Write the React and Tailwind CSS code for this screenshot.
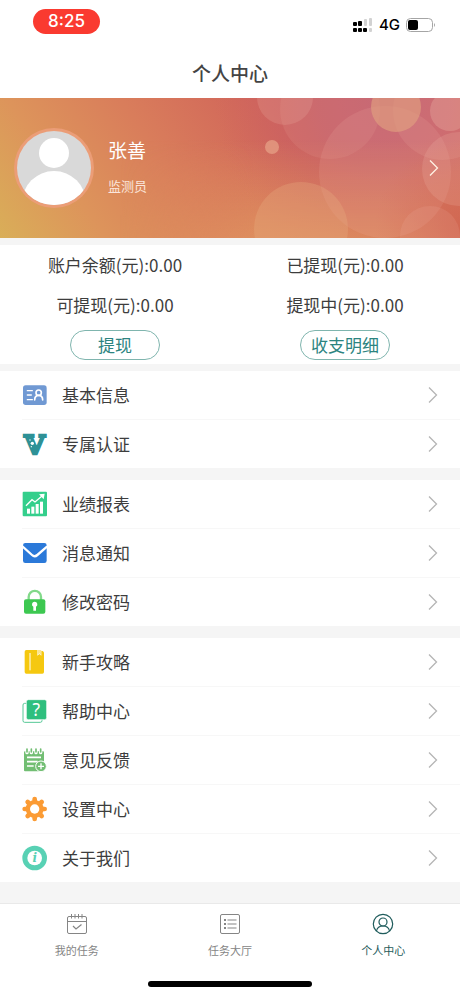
import React from 'react';

const IdCardIcon = () => (
    <svg viewBox="0 0 78 78" className="h-[26px] w-[26px]" fill="none" stroke="#fff" strokeWidth="5" strokeLinecap="round">
        <rect x="3" y="10" width="71" height="59" rx="8" fill="#7099d3" stroke="none" />
        <path d="M16 26h15M16 39h12M16 53h15" strokeWidth="4" />
        <circle cx="50" cy="32" r="8" />
        <path d="M38 54c0-9 4-14 12-14s12 5 12 14" />
    </svg>
);

const BadgeIcon = () => (
    <svg viewBox="0 0 78 78" className="h-[26px] w-[26px] overflow-visible">
        <text x="38" y="68" textAnchor="middle" fontFamily="DejaVu Serif, serif" fontWeight="700" fontSize="80" fill="#2e9196" stroke="#2e9196" strokeWidth="8">V</text>
        <circle cx="31" cy="37" r="5" fill="#fff" />
        <circle cx="24" cy="27" r="2" fill="#fff" />
        <circle cx="28" cy="47" r="2" fill="#fff" />
    </svg>
);

const ReportIcon = () => (
    <svg viewBox="0 0 78 78" className="h-[26px] w-[26px]" fill="#fff">
        <rect x="2" y="2" width="73" height="74" rx="3" fill="#34cf8c" />
        <rect x="15" y="53" width="9" height="15" />
        <rect x="28" y="47" width="9" height="21" />
        <rect x="41" y="39" width="9" height="29" />
        <rect x="54" y="32" width="9" height="36" />
        <path d="M12 44l18-18 9 7 21-18" fill="none" stroke="#fff" strokeWidth="4" />
        <path d="M51 10l17-2-3 17z" />
    </svg>
);

const MailIcon = () => (
    <svg viewBox="0 0 78 78" className="h-[26px] w-[26px]">
        <rect x="3" y="9" width="71" height="60" rx="7" fill="#2b79d9" />
        <path d="M1 19l29 26q8 7 16 0l30-26" fill="none" stroke="#fff" strokeWidth="7" />
    </svg>
);

const LockIcon = () => (
    <svg viewBox="0 0 78 78" className="h-[26px] w-[26px]">
        <path d="M20 34V24a18 18 0 0 1 37 0v10" fill="none" stroke="#82d98a" strokeWidth="7" />
        <rect x="6" y="31" width="64" height="43" rx="6" fill="#3dc851" />
        <path d="M38 38a8 8 0 0 1 4 15v12h-8V53a8 8 0 0 1 4-15z" fill="#fff" />
    </svg>
);

const BookIcon = () => (
    <svg viewBox="0 0 78 78" className="h-[26px] w-[26px]">
        <path d="M13 3h33v17l6-5 6 5V5q8 0 8 8v56q0 5-5 5H13q-5 0-5-5V8q0-5 5-5z" fill="#f5c810" />
        <path d="M24 12v52" stroke="#fff" strokeWidth="3" />
        <path d="M46 3h11v15l-5-5-6 5z" fill="#fbe48d" />
    </svg>
);

const HelpIcon = () => (
    <svg viewBox="0 0 78 78" className="h-[26px] w-[26px]">
        <rect x="3" y="16" width="57" height="57" rx="5" fill="#fff" stroke="#55c896" strokeWidth="3" />
        <rect x="13" y="5" width="61" height="60" rx="6" fill="#2fbf7e" stroke="#fff" strokeWidth="2" />
        <text x="43" y="53" textAnchor="middle" fontFamily="Noto Sans, sans-serif" fontSize="52" fill="#fff">?</text>
    </svg>
);

const FeedbackIcon = () => (
    <svg viewBox="0 0 78 78" className="h-[26px] w-[26px]" fill="none">
        <rect x="6" y="13" width="60" height="60" rx="3" fill="#72be73" />
        <path d="M15 5v12M28 5v12M42 5v12M56 5v12" stroke="#fff" strokeWidth="10" strokeLinecap="round" />
        <path d="M15 6v9M28 6v9M42 6v9M56 6v9" stroke="#72be73" strokeWidth="5" strokeLinecap="round" />
        <path d="M15 31h42M15 44h32M15 57h20" stroke="#fff" strokeWidth="5" />
        <circle cx="57" cy="58" r="16" fill="#72be73" stroke="#fff" strokeWidth="3" />
        <path d="M48 58h18M57 49v18" stroke="#fff" strokeWidth="4" />
    </svg>
);

const GearIcon = () => (
    <svg viewBox="0 0 78 78" className="h-[26px] w-[26px]">
        <g fill="none" stroke="#fb9b34" strokeWidth="14" strokeLinecap="round">
            <path d="M38 9v60M8 39h60" />
            <path d="M17 18l42 42M59 18L17 60" />
        </g>
        <circle cx="38" cy="39" r="27" fill="#fb9b34" />
        <circle cx="38" cy="39" r="14" fill="#fff" />
    </svg>
);

const AboutIcon = () => (
    <svg viewBox="0 0 78 78" className="h-[26px] w-[26px]">
        <circle cx="38" cy="39" r="37" fill="#58d1b4" />
        <circle cx="38" cy="39" r="22" fill="#fff" />
        <text x="38" y="52" textAnchor="middle" fontFamily="DejaVu Serif, serif" fontStyle="italic" fontWeight="700" fontSize="36" fill="#58d1b4">i</text>
    </svg>
);

const TasksIcon = () => (
    <svg viewBox="0 0 22 22" className="h-[22px] w-[22px]" fill="none" stroke="currentColor" strokeWidth="1">
        <rect x="1.5" y="3.5" width="19" height="17" rx="1.5" />
        <path d="M1.5 8.5h19M5.5 1v4.5M9 1v4.5M12.5 1v4.5M16 1v4.5" />
        <path d="M7 13l3 3 5.5-4.5" strokeWidth="1.2" />
    </svg>
);

const HallIcon = () => (
    <svg viewBox="0 0 22 22" className="h-[22px] w-[22px]" fill="none" stroke="currentColor" strokeWidth="1">
        <rect x="1.5" y="1.5" width="19" height="19" rx="1.5" />
        <path d="M8.5 7h9M8.5 11h9M8.5 15h9" strokeWidth="1.2" />
        <path d="M5 7h2M5 11h2M5 15h2" strokeWidth="2" />
    </svg>
);

const UserIcon = () => (
    <svg viewBox="0 0 22 22" className="h-[22px] w-[22px]" fill="none" stroke="currentColor" strokeWidth="1.2">
        <circle cx="11" cy="11" r="9.7" />
        <circle cx="11" cy="9" r="4" />
        <path d="M4.500 18c.6-3 3-5 6.500-5s5.900 2 6.500 5" />
    </svg>
);

const Chevron = ({ className }) => (
    <svg viewBox="0 0 10 16" className={`h-4 w-[10px] ${className}`} fill="none" stroke="currentColor" strokeWidth="1.3">
        <path d="M1 0.500L8.500 8L1 15.500" />
    </svg>
);

const menuGroups = [
    [
        { label: '基本信息', icon: <IdCardIcon /> },
        { label: '专属认证', icon: <BadgeIcon /> },
    ],
    [
        { label: '业绩报表', icon: <ReportIcon /> },
        { label: '消息通知', icon: <MailIcon /> },
        { label: '修改密码', icon: <LockIcon /> },
    ],
    [
        { label: '新手攻略', icon: <BookIcon /> },
        { label: '帮助中心', icon: <HelpIcon /> },
        { label: '意见反馈', icon: <FeedbackIcon /> },
        { label: '设置中心', icon: <GearIcon /> },
        { label: '关于我们', icon: <AboutIcon /> },
    ],
];

const tabs = [
    { label: '我的任务', icon: <TasksIcon />, active: false },
    { label: '任务大厅', icon: <HallIcon />, active: false },
    { label: '个人中心', icon: <UserIcon />, active: true },
];

const StatusBar = () => (
    <div className="flex h-12 items-start justify-between pl-[33px] pr-6 pt-[9px]">
        <div className="flex h-[25px] w-[67px] items-center justify-center rounded-full bg-[#fa3a30] font-['Inter',sans-serif] text-[17px] font-medium text-white">
            8:25
        </div>
        <div className="flex items-center gap-[6px] pt-1">
            <svg viewBox="0 0 20 14" className="h-[14px] w-5">
                <g fill="#000">
                    <rect x="0" y="4" width="4" height="4" rx="1" />
                    <rect x="5" y="3" width="4" height="5" rx="1" />
                    <rect x="0" y="10" width="4" height="4" rx="1" />
                    <rect x="5" y="10" width="4" height="4" rx="1" />
                    <rect x="10" y="10" width="4" height="4" rx="1" />
                </g>
                <g fill="#d2d2d2">
                    <rect x="11" y="1" width="3" height="7" rx="1" />
                    <rect x="16" y="0" width="3" height="8" rx="1" />
                    <rect x="16" y="10" width="3" height="4" rx="1" />
                </g>
            </svg>
            <span className="font-['Inter',sans-serif] text-[15px] font-medium leading-6 text-black">4G</span>
            <svg viewBox="0 0 30 14" className="h-[14px] w-[30px]">
                <rect x="0.5" y="0.5" width="26" height="13" rx="4" fill="none" stroke="#a5a5a5" />
                <rect x="2" y="2" width="10" height="10" rx="2" fill="#000" />
                <path d="M28 5q2 2 0 4z" fill="#a5a5a5" />
            </svg>
        </div>
    </div>
);

const BannerArt = () => (
    <svg viewBox="0 0 460 140" preserveAspectRatio="xMidYMid slice" className="absolute inset-0 h-full w-full">
        <defs>
            <linearGradient id="base" gradientUnits="userSpaceOnUse" x1="0" y1="150" x2="250" y2="-30">
                <stop offset="0" stopColor="#d9b058" />
                <stop offset="0.3" stopColor="#dd945b" />
                <stop offset="0.6" stopColor="#d97d5b" />
                <stop offset="1" stopColor="#d0625a" />
            </linearGradient>
            <radialGradient id="pink" gradientUnits="userSpaceOnUse" cx="385" cy="0" r="170">
                <stop offset="0" stopColor="#c25f70" />
                <stop offset="0.4" stopColor="#c6606a" stopOpacity="0.85" />
                <stop offset="1" stopColor="#ce6460" stopOpacity="0" />
            </radialGradient>
            <linearGradient id="warm" x1="0" y1="0" x2="0" y2="1">
                <stop offset="0.3" stopColor="#e29a60" stopOpacity="0" />
                <stop offset="1" stopColor="#e29a60" stopOpacity="0.65" />
            </linearGradient>
            <radialGradient id="corner" gradientUnits="userSpaceOnUse" cx="465" cy="130" r="90">
                <stop offset="0" stopColor="#cf604f" stopOpacity="0.8" />
                <stop offset="1" stopColor="#cf604f" stopOpacity="0" />
            </radialGradient>
        </defs>
        <rect width="460" height="140" fill="url(#base)" />
        <rect width="460" height="140" fill="url(#pink)" />
        <rect x="120" width="340" height="140" fill="url(#warm)" mask="url(#fade)" />
        <mask id="fade">
            <linearGradient id="fadeFill">
                <stop offset="0" stopColor="#000" />
                <stop offset="0.4" stopColor="#fff" />
            </linearGradient>
            <rect x="120" width="340" height="140" fill="url(#fadeFill)" />
        </mask>
        <rect width="460" height="140" fill="url(#corner)" />
        <g fill="#f0b8a8" fillOpacity="0.2">
            <circle cx="285" cy="-1" r="28" />
            <circle cx="330" cy="11" r="50" fillOpacity="0.12" />
            <circle cx="385" cy="74" r="66" fillOpacity="0.15" />
            <circle cx="443" cy="12" r="50" fillOpacity="0.15" />
            <circle cx="459" cy="71" r="37" />
            <circle cx="450" cy="13" r="20" fillOpacity="0.3" />
            <circle cx="430" cy="138" r="30" fillOpacity="0.15" />
        </g>
        <circle cx="301" cy="131" r="47" fill="#e8b080" fillOpacity="0.3" />
        <circle cx="396" cy="9" r="25" fill="#e0a080" fillOpacity="0.65" />
        <circle cx="272" cy="49" r="7" fill="#e5a085" fillOpacity="0.75" />
    </svg>
);

const Avatar = () => (
    <svg viewBox="0 0 80 80" className="h-20 w-20 shrink-0">
        <defs>
            <clipPath id="avatarClip">
                <circle cx="40" cy="40" r="37" />
            </clipPath>
        </defs>
        <circle cx="40" cy="40" r="40" fill="#eb9d77" />
        <g clipPath="url(#avatarClip)">
            <rect width="80" height="80" fill="#d9d9d9" />
            <circle cx="40" cy="25" r="15" fill="#fff" />
            <ellipse cx="40" cy="75" rx="32" ry="32" fill="#fff" />
        </g>
    </svg>
);

const Balance = ({ rows, action }) => (
    <div className="flex flex-col items-center">
        {rows.map((row) => (
            <p key={row} className="h-10 text-[17px] leading-10">{row}</p>
        ))}
        <div className="flex h-[39px] items-center">
            <button type="button" className="flex h-[30px] w-[90px] items-center justify-center rounded-full border border-[#7fb5ae] text-[17px] leading-6 text-[#2c8480]">
                {action}
            </button>
        </div>
    </div>
);

const App = () => {
    return (
        <div className="flex min-h-screen flex-col bg-[#f5f5f5] font-['Noto_Sans_CJK_SC',sans-serif] text-[#3d3d3d]">
            <header className="bg-white">
                <StatusBar />
                <h1 className="h-[50px] text-center text-[19px] font-medium leading-[50px] text-[#444]">个人中心</h1>
            </header>

            <main className="flex-1">
                <a href="#profile" className="relative flex h-[140px] items-center overflow-hidden pl-[14px] pr-[21px] text-white">
                    <BannerArt />
                    <div className="relative flex flex-1 items-center gap-[14px]">
                        <Avatar />
                        <div className="flex flex-col gap-2">
                            <span className="text-[19px] leading-7">张善</span>
                            <span className="text-[13px] leading-7 text-[#fbe6dc]">监测员</span>
                        </div>
                        <Chevron className="ml-auto text-[#fff3e4]" />
                    </div>
                </a>

                <section className="mt-[7px] grid grid-cols-2 bg-white">
                    <Balance rows={['账户余额(元):0.00', '可提现(元):0.00']} action="提现" />
                    <Balance rows={['已提现(元):0.00', '提现中(元):0.00']} action="收支明细" />
                </section>

                <div className="mt-[7px] flex flex-col gap-3">
                    {menuGroups.map((group) => (
                        <ul key={group[0].label} className="divide-y divide-[#f7f7f7] bg-white pl-[22px]">
                            {group.map((item) => (
                                <li key={item.label}>
                                    <a href="#menu" className="flex h-12 items-center gap-[14px] pr-[22px]">
                                        {item.icon}
                                        <span className="text-[17px]">{item.label}</span>
                                        <Chevron className="ml-auto text-[#b5b5b5]" />
                                    </a>
                                </li>
                            ))}
                        </ul>
                    ))}
                </div>
            </main>

            <footer className="mt-5 border-t border-[#e9e9e9] bg-white pb-[9px]">
                <nav className="grid grid-cols-3 pt-[9px]">
                    {tabs.map((tab) => (
                        <a
                            key={tab.label}
                            href="#tab"
                            className={`flex flex-col items-center gap-[6px] ${tab.active ? 'text-[#1f5c5c]' : 'text-[#858585]'}`}
                        >
                            {tab.icon}
                            <span className="text-[11px] leading-[18px]">{tab.label}</span>
                        </a>
                    ))}
                </nav>
                <div className="mx-auto mt-[22px] h-[6px] w-[164px] rounded-full bg-black" />
            </footer>
        </div>
    );
};

export default App;
